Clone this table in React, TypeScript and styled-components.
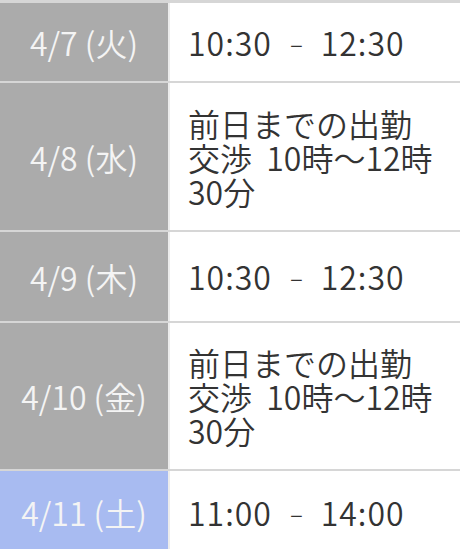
import React from "react";
import styled, { createGlobalStyle } from "styled-components";

const Global = createGlobalStyle`
  html, body { margin: 0; padding: 0; background: #ffffff; }
  body { font-family: "Noto Sans CJK JP", "Noto Sans", sans-serif; }
`;

const Table = styled.div`
  width: 460px;
  border-top: 3px solid #d6d6d6;
  overflow: hidden;
`;

const Row = styled.div<{ $h: number }>`
  display: grid;
  grid-template-columns: 168px 2px 1fr;
  height: ${(p) => p.$h}px;
  border-bottom: 2px solid #d6d6d6;
`;

const DateCell = styled.div<{ $sat?: boolean }>`
  background: ${(p) => (p.$sat ? "#a8bbf1" : "#ababab")};
  color: #f4f4f4;
  font-size: 32px;
  font-weight: 350;
  display: flex;
  align-items: center;
  justify-content: center;
  white-space: pre;
`;

const Divider = styled.div`
  background: #ececec;
`;

const InfoCell = styled.div`
  display: flex;
  align-items: center;
  padding: 0 20px 0 18px;
  color: #333333;
  font-size: 32px;
  font-weight: 350;
  line-height: 34px;
  white-space: pre-wrap;
`;

const Time = styled.span`
  letter-spacing: 1px;
`;

const Dash = styled.span`
  font-size: 24px;
  margin: 0 18px;
  vertical-align: 3px;
  letter-spacing: 0;
`;

type Item = { date: string; h: number; sat?: boolean; time?: [string, string]; note?: string };

const items: Item[] = [
  { date: "4/7 (火)", h: 78, time: ["10:30", "12:30"] },
  { date: "4/8 (水)", h: 147, note: "前日までの出勤交渉  10時〜12時30分" },
  { date: "4/9 (木)", h: 89, time: ["10:30", "12:30"] },
  { date: "4/10 (金)", h: 146, note: "前日までの出勤交渉  10時〜12時30分" },
  { date: "4/11 (土)", h: 82, sat: true, time: ["11:00", "14:00"] },
];

export default function App() {
  return (
    <>
      <Global />
      <Table>
        {items.map((it) => (
          <Row key={it.date} $h={it.h}>
            <DateCell $sat={it.sat}>{it.date}</DateCell>
            <Divider />
            <InfoCell>
              {it.time ? (
                <Time>
                  {it.time[0]}
                  <Dash>–</Dash>
                  {it.time[1]}
                </Time>
              ) : (
                <span>{it.note}</span>
              )}
            </InfoCell>
          </Row>
        ))}
      </Table>
    </>
  );
}
